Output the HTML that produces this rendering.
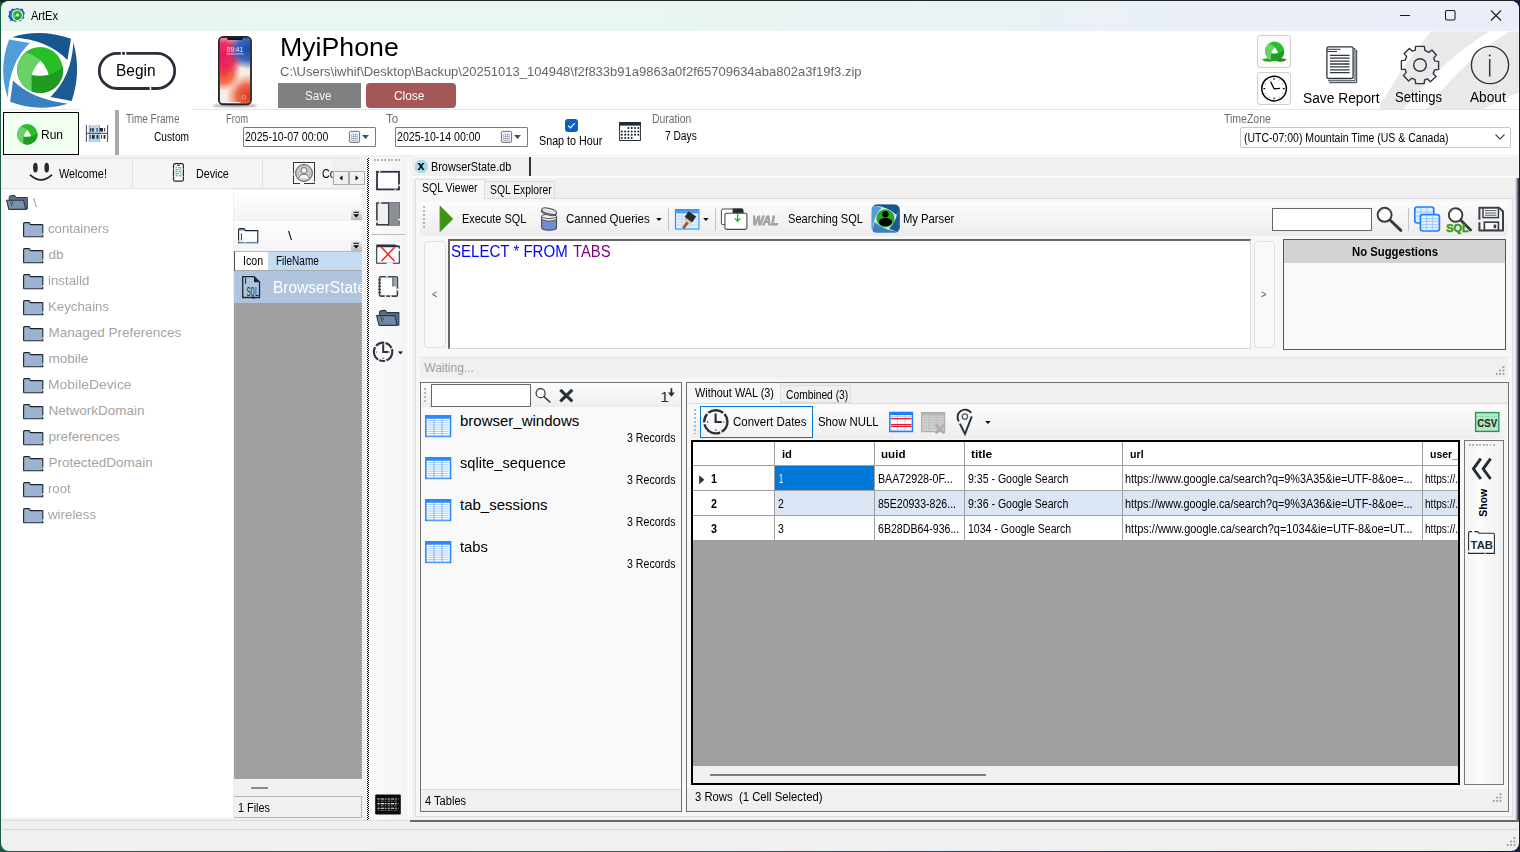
<!DOCTYPE html>
<html lang="en"><head><meta charset="utf-8"><title>ArtEx</title>
<style>
*{box-sizing:border-box;margin:0;padding:0}
html,body{width:1520px;height:852px;overflow:hidden}
body{background:linear-gradient(to right,#1b5a44 0%,#1d6a52 45%,#2a2a6a 75%,#1a1450 100%);font-family:"Liberation Sans",sans-serif;position:relative}
body:before{content:"";position:absolute;left:0;top:0;width:1520px;height:2px;background:#1a2420}
.win{position:absolute;left:1px;top:1px;width:1518px;height:849.5px;border-radius:8px;overflow:hidden;background:#f0f0f0}
.c{position:absolute;left:-1px;top:-1px;width:1520px;height:852px}
.b{position:absolute}
.t{position:absolute;white-space:nowrap;line-height:1;display:block;transform-origin:0 0}
svg{position:absolute;overflow:visible}

</style></head>
<body>
<div class="win"><div class="c">
<!-- title bar -->
<div class="b" style="left:0;top:0;width:1520px;height:31px;background:linear-gradient(to right,#e9f6f0 0%,#e9f6f1 40%,#eaf0f7 75%,#ebeef9 100%)"></div>
<!-- header white -->
<div class="b" style="left:0;top:31px;width:1520px;height:124px;background:#fff"></div>
<div class="b" style="left:192px;top:109px;width:1328px;height:1px;background:#e6e6e6"></div>
<!-- window buttons -->
<svg style="left:1395px;top:5px" width="120" height="22" viewBox="0 0 120 22"><g stroke="#1a1a1a" stroke-width="1.1" fill="none"><path d="M5 10.5h10"/><rect x="50.5" y="5.5" width="9.5" height="9.5" rx="1.5"/><path d="M96 5.5l10 10M106 5.5l-10 10"/></g></svg>
<!-- save/close buttons -->
<div class="b" style="left:278.2px;top:83.3px;width:82.6px;height:24.5px;background:#808080"></div>
<div class="b" style="left:366px;top:83.3px;width:89.8px;height:24.5px;background:#a55757;border-radius:4px"></div>
<!-- Begin pill -->
<!-- Run button -->
<div class="b" style="left:3px;top:112px;width:76px;height:43px;border:1px solid #000;background:#f0fff0"></div>
<div class="b" style="left:2px;top:109px;width:79px;height:1px;background:#ececec"></div>
<div class="b" style="left:115px;top:110px;width:4px;height:45px;background:#a9a9a9"></div>
<!-- date inputs -->
<div class="b" style="left:243px;top:127px;width:133px;height:20px;border:1px solid #7a7a7a;background:#fff;border-radius:1px"></div>
<div class="b" style="left:395px;top:127px;width:133px;height:20px;border:1px solid #7a7a7a;background:#fff;border-radius:1px"></div>
<!-- checkbox -->
<div class="b" style="left:565px;top:119px;width:13px;height:13px;background:#0a5fbf;border-radius:3px"></div>
<svg style="left:565px;top:119px" width="13" height="13" viewBox="0 0 13 13"><path d="M3.2 6.6l2.2 2.2 4.4-4.6" stroke="#fff" stroke-width="1.2" fill="none"/></svg>
<!-- timezone combo -->
<div class="b" style="left:1240px;top:127px;width:271px;height:21px;border:1px solid #c8c8c8;background:#fff;border-radius:2px"></div>
<svg style="left:1494px;top:133px" width="12" height="8" viewBox="0 0 12 8"><path d="M1.5 1.5l4.5 4.5 4.5-4.5" stroke="#444" stroke-width="1.1" fill="none"/></svg>
<!-- small buttons top right -->
<div class="b" style="left:1257px;top:35px;width:34px;height:33px;border:1px solid #d0d0d0;background:#fbfbfb;border-radius:3px"></div>
<div class="b" style="left:1257px;top:72px;width:34px;height:33px;border:1px solid #d0d0d0;background:#fbfbfb;border-radius:3px"></div>

<!-- LEFT: tab strip -->
<div class="b" style="left:2px;top:158px;width:364px;height:31px;background:#f5f5f5;border-top:1px solid #e8e8e8;border-bottom:1px solid #e2e2e2"></div>
<div class="b" style="left:132px;top:159px;width:1px;height:29px;background:#e2e2e2"></div>
<div class="b" style="left:262px;top:159px;width:1px;height:29px;background:#e2e2e2"></div>
<div class="b" style="left:332px;top:159px;width:34px;height:29px;background:#f0f0f0"></div>
<div class="b" style="left:333px;top:171px;width:16px;height:14px;border:1px solid #adadad;background:#f0f0f0"></div>
<div class="b" style="left:349px;top:171px;width:16px;height:14px;border:1px solid #adadad;background:#f0f0f0"></div>
<svg style="left:333px;top:171px" width="32" height="14" viewBox="0 0 32 14"><path d="M9.5 4.5v5l-3-2.5zM22.5 4.5v5l3-2.5z" fill="#000"/></svg>
<!-- tree -->
<div class="b" style="left:5px;top:189px;width:228px;height:629px;background:#fff"></div>
<div class="b" style="left:2px;top:189px;width:3px;height:629px;background:#f8f8f8"></div>
<!-- file panel -->
<div class="b" style="left:234px;top:190px;width:128px;height:30px;background:linear-gradient(#fff,#f4f4f4)"></div>
<div class="b" style="left:234px;top:221px;width:128px;height:29px;background:linear-gradient(#fff,#f4f4f4)"></div>
<div class="b" style="left:234px;top:251px;width:128px;height:20px;background:#fff;border-top:1px solid #bbb"></div>
<div class="b" style="left:268px;top:252px;width:94px;height:19px;background:#c3dcf3"></div>
<div class="b" style="left:234px;top:271px;width:128px;height:32px;background:#b0c4de"></div>
<div class="b" style="left:234px;top:270px;width:128px;height:1px;background:#a8a8a8"></div>
<div class="b" style="left:234px;top:251px;width:1px;height:20px;background:#555"></div>
<div class="b" style="left:234px;top:303px;width:128px;height:476px;background:#a0a0a0"></div>
<div class="b" style="left:251px;top:787px;width:17px;height:2px;background:#8a8a8a"></div>
<div class="b" style="left:234px;top:796px;width:128px;height:22px;border:1px solid #b5b5b5;border-left:none;background:#f0f0f0"></div>
<!-- splitter -->
<div class="b" style="left:366px;top:158px;width:4px;height:662px;background:#fbfbfb"></div>
<div class="b" style="left:367px;top:158px;width:2px;height:662px;background:repeating-conic-gradient(#000 0 25%,#fff 0 50%) 0 0/2px 2px"></div>
<!-- vertical toolbar -->
<div class="b" style="left:370px;top:157px;width:37px;height:663px;background:linear-gradient(to right,#fbfbfb,#f4f4f4)"></div>
<div class="b" style="left:407px;top:157px;width:3px;height:663px;background:#fafafa"></div>
<div class="b" style="left:374px;top:159.4px;width:26px;height:1.8px;background-image:repeating-linear-gradient(to right,#b4b4b4 0 1.8px,transparent 1.8px 3.45px)"></div>
<div class="b" style="left:372px;top:234px;width:33px;height:1px;background:#bdbdbd"></div>

<!-- RIGHT panel -->
<div class="b" style="left:411px;top:157px;width:1px;height:664px;background:#fcfcfc"></div>
<div class="b" style="left:411px;top:156px;width:1104px;height:1px;background:#fcfcfc"></div>
<div class="b" style="left:410px;top:820px;width:1109px;height:2.2px;background:#6a6a6a"></div>
<div class="b" style="left:1515.4px;top:178px;width:3.6px;height:642px;background:linear-gradient(to right,#ececec 0%,#b0b0b0 40%,#55535f 72%,#2e2c48 100%)"></div>
<div class="b" style="left:2px;top:820px;width:408px;height:1px;background:#dcdcdc"></div>
<div class="b" style="left:2px;top:829px;width:1516px;height:1px;background:#d5d5d5"></div>
<!-- doc tab -->
<div class="b" style="left:529px;top:157px;width:1.5px;height:20px;background:#333"></div>
<div class="b" style="left:412px;top:176px;width:1107px;height:1.5px;background:#fcfcfc"></div>
<!-- sql tabs -->
<div class="b" style="left:415px;top:198px;width:1098px;height:619px;background:#f7f7f7;border:1px solid #dedede"></div>
<div class="b" style="left:415px;top:179px;width:70px;height:21px;background:#f7f7f7;border:1px solid #dedede;border-bottom:none"></div>
<div class="b" style="left:485px;top:181px;width:70px;height:18px;background:#f0f0f0;border:1px solid #dcdcdc;border-left:none"></div>
<!-- sql toolbar -->
<div class="b" style="left:420px;top:202px;width:1088px;height:34px;background:linear-gradient(#fcfcfc,#ececec);border-radius:3px"></div>
<div class="b" style="left:423px;top:206px;width:2px;height:23px;background-image:repeating-linear-gradient(#b4b4b4 0 2px,transparent 2px 4px)"></div>
<div class="b" style="left:668px;top:208px;width:1px;height:23px;background:#c4c4c4"></div>
<div class="b" style="left:715px;top:208px;width:1px;height:23px;background:#c4c4c4"></div>
<div class="b" style="left:1408px;top:208px;width:1px;height:23px;background:#c4c4c4"></div>
<div class="b" style="left:1272px;top:208px;width:100px;height:23px;background:#fff;border:1px solid #666"></div>
<!-- editor -->
<div class="b" style="left:424px;top:241px;width:22px;height:107px;border:1px solid #e0e0e0;border-radius:4px;background:#f9f9f9"></div>
<div class="b" style="left:448px;top:239px;width:803px;height:110px;background:#fff;border:1px solid #d8d8d8;border-top:2px solid #666;border-left:2px solid #666"></div>
<div class="b" style="left:1254px;top:241px;width:21px;height:107px;border:1px solid #e0e0e0;border-radius:4px;background:#f9f9f9"></div>
<div class="b" style="left:1283px;top:239px;width:223px;height:111px;background:#f9f9f9;border:1px solid #555"></div>
<div class="b" style="left:1284px;top:240px;width:221px;height:23px;background:#d3d3d3"></div>
<!-- waiting -->
<div class="b" style="left:420px;top:357px;width:1088px;height:21px;background:#f0f0f0;border-top:1px solid #e4e4e4"></div>
<!-- tables panel -->
<div class="b" style="left:420px;top:382px;width:262px;height:430px;background:#f9f9f9;border:1px solid #707070"></div>
<div class="b" style="left:421px;top:383px;width:260px;height:24px;background:linear-gradient(#fdfdfd,#ededed)"></div>
<div class="b" style="left:424px;top:388px;width:2px;height:14px;background-image:repeating-linear-gradient(#b4b4b4 0 2px,transparent 2px 4px)"></div>
<div class="b" style="left:431px;top:384px;width:100px;height:23px;background:#fff;border:1px solid #666"></div>
<div class="b" style="left:421px;top:789px;width:260px;height:22px;background:#f0f0f0;border-top:1px solid #dcdcdc"></div>
<!-- results panel -->
<div class="b" style="left:686px;top:382px;width:823px;height:430px;background:#f0f0f0;border:1px solid #707070"></div>
<div class="b" style="left:687px;top:383px;width:94px;height:21px;background:#f7f7f7;border-right:1px solid #dedede"></div>
<div class="b" style="left:781px;top:385px;width:70px;height:18px;background:#f0f0f0;border:1px solid #dcdcdc;border-left:none"></div>
<div class="b" style="left:687px;top:403px;width:821px;height:386px;background:#f7f7f7;border-top:1px solid #dedede"></div>
<div class="b" style="left:691px;top:405px;width:814px;height:34px;background:linear-gradient(#fcfcfc,#eeeeee);border-radius:3px"></div>
<div class="b" style="left:694px;top:409px;width:2px;height:25px;background-image:repeating-linear-gradient(#b4b4b4 0 2px,transparent 2px 4px)"></div>
<div class="b" style="left:700px;top:406px;width:113px;height:32px;background:rgba(255,255,255,.25);border:1px solid #0078d7"></div>
<!-- grid -->
<div class="b" style="left:691px;top:440px;width:769px;height:345px;background:#a0a0a0;border:2px solid #000"></div>
<div class="b" style="left:693px;top:442px;width:765px;height:98px;background:#fff"></div>
<div class="b" style="left:775px;top:491px;width:683px;height:24px;background:#dbe5f3"></div>
<div class="b" style="left:775px;top:466px;width:99px;height:24px;background:#0078d7"></div>
<!-- grid lines -->
<div class="b" style="left:693px;top:465px;width:765px;height:1px;background:#a0a0a0"></div>
<div class="b" style="left:693px;top:490px;width:765px;height:1px;background:#a0a0a0"></div>
<div class="b" style="left:693px;top:515px;width:765px;height:1px;background:#a0a0a0"></div>
<div class="b" style="left:774px;top:442px;width:1px;height:98px;background:#a0a0a0"></div>
<div class="b" style="left:874px;top:442px;width:1px;height:98px;background:#a0a0a0"></div>
<div class="b" style="left:964px;top:442px;width:1px;height:98px;background:#a0a0a0"></div>
<div class="b" style="left:1122px;top:442px;width:1px;height:98px;background:#a0a0a0"></div>
<div class="b" style="left:1422px;top:442px;width:1px;height:98px;background:#a0a0a0"></div>
<svg style="left:699px;top:475px" width="6" height="10" viewBox="0 0 6 10"><path d="M0.2 0.2v9l5.2-4.5z" fill="#333"/></svg>
<!-- grid scrollbar -->
<div class="b" style="left:693px;top:766px;width:765px;height:17px;background:#f0f0f0"></div>
<div class="b" style="left:710px;top:774px;width:276px;height:2px;background:#7d7d7d"></div>
<!-- right side panel -->
<div class="b" style="left:1464px;top:440px;width:40px;height:345px;background:linear-gradient(to right,#f4f4f4,#fbfbfb 40%,#f1f1f1);border:1px solid #777"></div>
<div class="b" style="left:1469.4px;top:444px;width:26px;height:1.8px;background-image:repeating-linear-gradient(to right,#b4b4b4 0 1.8px,transparent 1.8px 3.45px)"></div>
<!-- results status -->
<div class="b" style="left:687px;top:789px;width:821px;height:22px;background:#f0f0f0"></div>
<!-- big logo -->
<svg style="left:0px;top:30px" width="90" height="82" viewBox="0 0 935 852">
<path d="M125,75 Q420,-18 738,92 L700,312 Q500,100 125,75Z" fill="#17568e"/>
<path d="M762,130 Q848,430 745,738 L525,695 Q745,480 762,130Z" fill="#1d5a92"/>
<path d="M135,525 Q330,720 705,765 Q400,858 105,745Z" fill="#3a80c0"/>
<path d="M310,135 L95,100 Q-22,400 80,705 Q100,330 310,135Z" fill="#529cda"/>
<circle cx="415" cy="415" r="238" fill="#28be28"/>
<path d="M270,235 Q360,260 420,318 Q350,390 330,468 L330,640 A238,238 0 0 1 270,235Z" fill="#68d268"/>
<path d="M330,468 Q420,485 505,465 Q600,440 655,380 A238,238 0 0 1 330,640Z" fill="#209a20"/>
<path d="M420,318 Q350,390 330,468 Q420,485 505,465 Q480,380 420,318Z" fill="#fff"/>
</svg>
<!-- title icon -->
<svg style="left:8.6px;top:6.6px" width="17.2" height="17.2" viewBox="8 6 19 19">
<path d="M11.4 7.6l2.8.6l3-1.2l2.9 1.2l2.9-.5l1 2.7l1.6 2.3l-1.2 2.6l.5 3l-2.6 1.2l-1.6 2.4l-2.9-.6l-2.7 1.3l-2.7-1.4l-2.9.4l-.9-2.8l-1.7-2.3l1.3-2.7l-.5-2.9l2.6-1.1z" fill="#2067b4"/>
<circle cx="17.2" cy="15.1" r="6.3" fill="#fff"/>
<circle cx="17.2" cy="15.1" r="5.2" fill="#28b428"/>
<path d="M12.2 13.6A5.2 5.2 0 0 0 15 19.8L15.2 15.6Z" fill="#68d268"/>
<path d="M15 16.4h4.6l2.4-1.2A5.2 5.2 0 0 1 14.8 19.7Z" fill="#209a20"/>
<path d="M17.3 12.7l2.3 3.6h-4.6z" fill="#fff"/>
</svg>
<!-- header swooshes -->
<svg style="left:1380px;top:31px" width="139" height="78" viewBox="1380 31 139 78">
<path d="M1385,97.4 Q1405,62 1431,31.4 L1489,31.4 Q1440,62 1404,109 L1380,109 L1380,104Z" fill="#e9e9e9"/>
<path d="M1426.4,109 Q1462,62 1509,31.4 L1519,31.4 L1519,92.5 Q1500,100 1484,109Z" fill="#e9e9e9"/>
</svg>
<!-- phone -->
<svg style="left:205px;top:30px" width="60" height="82" viewBox="0 0 623 852">
<defs>
<radialGradient id="pg1" cx="190" cy="260" r="230" gradientUnits="userSpaceOnUse"><stop offset="0" stop-color="#e8185c"/><stop offset=".55" stop-color="#e8205a" stop-opacity=".9"/><stop offset="1" stop-color="#e8205a" stop-opacity="0"/></radialGradient>
<radialGradient id="pg2" cx="450" cy="200" r="210" gradientUnits="userSpaceOnUse"><stop offset="0" stop-color="#1c48ac"/><stop offset=".55" stop-color="#2458b8" stop-opacity=".9"/><stop offset="1" stop-color="#2458b8" stop-opacity="0"/></radialGradient>
<radialGradient id="pg3" cx="450" cy="690" r="235" gradientUnits="userSpaceOnUse"><stop offset="0" stop-color="#e03818"/><stop offset=".5" stop-color="#e85030" stop-opacity=".85"/><stop offset="1" stop-color="#f08050" stop-opacity="0"/></radialGradient>
<radialGradient id="pg4" cx="195" cy="455" r="175" gradientUnits="userSpaceOnUse"><stop offset="0" stop-color="#f04a2c"/><stop offset=".55" stop-color="#f05c3a" stop-opacity=".85"/><stop offset="1" stop-color="#f07050" stop-opacity="0"/></radialGradient>
<filter id="pbl" x="-20%" y="-100%" width="140%" height="300%"><feGaussianBlur stdDeviation="9"/></filter>
<clipPath id="pcl"><rect x="152" y="80" width="318" height="684" rx="38"/></clipPath>
</defs>
<ellipse cx="310" cy="786" rx="235" ry="14" fill="#000" opacity=".45" filter="url(#pbl)"/>
<rect x="135" y="62" width="352" height="720" rx="56" fill="#222226"/>
<g clip-path="url(#pcl)">
<rect x="152" y="80" width="318" height="684" fill="#f7ebe4"/>
<rect x="152" y="80" width="318" height="684" fill="url(#pg4)"/>
<rect x="152" y="80" width="318" height="684" fill="url(#pg1)"/>
<rect x="152" y="80" width="318" height="684" fill="url(#pg2)"/>
<rect x="152" y="80" width="318" height="684" fill="url(#pg3)"/>
</g>
<path d="M228,78h165v8q0,18-18,18h-129q-18,0-18-18z" fill="#141416"/>
<text x="311" y="226" font-size="68" fill="#fff" text-anchor="middle" font-family="Liberation Sans,sans-serif" opacity=".92">09:41</text>
<rect x="222" y="243" width="180" height="12" fill="#fff" opacity=".55"/>
<circle cx="212" cy="698" r="19" fill="none" stroke="#fff" stroke-width="5" opacity=".8"/>
<circle cx="406" cy="698" r="19" fill="none" stroke="#fff" stroke-width="5" opacity=".8"/>
<rect x="205" y="748" width="165" height="7" rx="3" fill="#fff"/>
</svg>
<!-- begin pill -->
<svg style="left:90px;top:44px" width="96" height="54" viewBox="90 44 96 54">
<rect x="99.3" y="53.3" width="75.4" height="35.2" rx="17.6" fill="none" stroke="#27303a" stroke-width="2.8"/>
<rect x="120.8" y="51" width="1.3" height="5" fill="#fff"/><rect x="124.9" y="51" width="1.4" height="5" fill="#fff"/>
<rect x="149.7" y="86" width="1.5" height="5" fill="#fff"/>
</svg>
<!-- run icon -->
<svg style="left:16.6px;top:123.6px" width="20.4" height="20.4" viewBox="177 177 476 476">
<circle cx="415" cy="415" r="238" fill="#28be28"/>
<path d="M270,235 Q360,260 420,318 Q350,390 330,468 L330,640 A238,238 0 0 1 270,235Z" fill="#68d268"/>
<path d="M330,468 Q420,485 505,465 Q600,440 655,380 A238,238 0 0 1 330,640Z" fill="#209a20"/>
<path d="M420,318 Q350,390 330,468 Q420,485 505,465 Q480,380 420,318Z" fill="#fff"/>
</svg>
<!-- barcode icon -->
<svg style="left:85px;top:124px" width="24" height="19" viewBox="85 124 24 19">
<rect x="89" y="125" width="10.8" height="17" fill="#bcd6f2"/>
<path d="M89.3 125v17M99.6 125v17" stroke="#5a9ae0" stroke-width=".7"/>
<path d="M86.4 125v17M107.6 125v17M86 133.3h22" stroke="#2a3444" stroke-width=".9"/>
<g fill="#1f2833"><rect x="90.2" y="128" width="1.1" height="3.6"/><rect x="92.2" y="128" width="1.6" height="3.6"/><rect x="96.6" y="128" width="1" height="3.6"/><rect x="99.6" y="128" width="3.4" height="3.6"/><rect x="104.2" y="128" width=".9" height="3.6"/>
<rect x="89.8" y="135" width=".9" height="3.8"/><rect x="92" y="135" width="2.6" height="3.8"/><rect x="96.6" y="135" width="1.8" height="3.8"/><rect x="101" y="135" width=".9" height="3.8"/><rect x="103.6" y="135" width="1.8" height="3.8"/></g>
</svg>
<!-- date picker icons -->
<svg style="left:348px;top:130px" width="24" height="14" viewBox="348 130 24 14">
<rect x="349.4" y="131.4" width="10.2" height="11" rx="1.2" fill="#e9eef8" stroke="#6e5e5c" stroke-width=".9"/>
<rect x="351.3" y="134.2" width="6.4" height="6.6" fill="#aab2c4"/>
<g fill="#eef2fa"><rect x="352" y="134.9" width="1.1" height="1.1"/><rect x="354" y="134.9" width="1.1" height="1.1"/><rect x="356" y="134.9" width="1.1" height="1.1"/><rect x="352" y="136.9" width="1.1" height="1.1"/><rect x="354" y="136.9" width="1.1" height="1.1"/><rect x="356" y="136.9" width="1.1" height="1.1"/><rect x="352" y="138.9" width="1.1" height="1.1"/><rect x="354" y="138.9" width="1.1" height="1.1"/><rect x="356" y="138.9" width="1.1" height="1.1"/></g>
<path d="M362 135h7l-3.5 4z" fill="#3c4e78"/>
</svg>
<svg style="left:500px;top:130px" width="24" height="14" viewBox="348 130 24 14">
<rect x="349.4" y="131.4" width="10.2" height="11" rx="1.2" fill="#e9eef8" stroke="#6e5e5c" stroke-width=".9"/>
<rect x="351.3" y="134.2" width="6.4" height="6.6" fill="#aab2c4"/>
<g fill="#eef2fa"><rect x="352" y="134.9" width="1.1" height="1.1"/><rect x="354" y="134.9" width="1.1" height="1.1"/><rect x="356" y="134.9" width="1.1" height="1.1"/><rect x="352" y="136.9" width="1.1" height="1.1"/><rect x="354" y="136.9" width="1.1" height="1.1"/><rect x="356" y="136.9" width="1.1" height="1.1"/><rect x="352" y="138.9" width="1.1" height="1.1"/><rect x="354" y="138.9" width="1.1" height="1.1"/><rect x="356" y="138.9" width="1.1" height="1.1"/></g>
<path d="M362 135h7l-3.5 4z" fill="#3c4e78"/>
</svg>
<!-- calendar icon -->
<svg style="left:618px;top:121px" width="24" height="21" viewBox="618 121 24 21">
<rect x="619.6" y="122.5" width="20.8" height="18" fill="#fff" stroke="#222c36" stroke-width="1"/>
<rect x="619.2" y="122" width="21.6" height="3.6" fill="#222c36"/>
<g fill="#1c222a">
<circle cx="628.4" cy="128" r="1"/><circle cx="631.7" cy="128" r="1"/><circle cx="635" cy="128" r="1"/><circle cx="638.3" cy="128" r="1"/>
<circle cx="621.8" cy="131.4" r="1"/><circle cx="625.1" cy="131.4" r="1"/><circle cx="628.4" cy="131.4" r="1"/><circle cx="631.7" cy="131.4" r="1"/><circle cx="635" cy="131.4" r="1"/><circle cx="638.3" cy="131.4" r="1"/>
<circle cx="621.8" cy="134.7" r="1"/><circle cx="625.1" cy="134.7" r="1"/><circle cx="628.4" cy="134.7" r="1"/><circle cx="631.7" cy="134.7" r="1"/><circle cx="635" cy="134.7" r="1"/><circle cx="638.3" cy="134.7" r="1"/>
<circle cx="621.8" cy="138" r="1"/><circle cx="625.1" cy="138" r="1"/><circle cx="628.4" cy="138" r="1"/><circle cx="631.7" cy="138" r="1"/>
</g></svg>
<!-- top-right small buttons icons -->
<svg style="left:1257px;top:35px" width="34" height="70" viewBox="1257 35 34 70">
<path d="M1261.7 59.8q6-3.4 12.6 0.6q-6.6 3.2-12.6-0.6z" fill="#22a622"/>
<path d="M1274.6 60.4q6.4-4 12.4-0.6q-6 3.8-12.4 0.6z" fill="#2f7d2f"/>
<g transform="translate(1265 41.6) scale(0.03992)"><g transform="translate(-177 -177)">
<circle cx="415" cy="415" r="238" fill="#28be28"/>
<path d="M270,235 Q360,260 420,318 Q350,390 330,468 L330,640 A238,238 0 0 1 270,235Z" fill="#68d268"/>
<path d="M330,468 Q420,485 505,465 Q600,440 655,380 A238,238 0 0 1 330,640Z" fill="#209a20"/>
<path d="M420,318 Q350,390 330,468 Q420,485 505,465 Q480,380 420,318Z" fill="#fff"/></g></g>
<circle cx="1274.1" cy="88.6" r="12.3" fill="#fff" stroke="#000" stroke-width="1.5"/>
<path d="M1270.9 82.2l3.2 6.6l5.4-.5" stroke="#000" stroke-width="1.3" fill="none" stroke-linecap="round"/>
<g stroke="#000" stroke-width="1.1"><path d="M1274.1 78v1.8M1274.1 97.4v1.8M1263.5 88.6h1.8M1282.9 88.6h1.8"/></g>
<g stroke="#777" stroke-width=".7"><path d="M1268.8 79.4l.7 1.2M1279.4 79.4l-.7 1.2M1264.9 83.3l1.2.7M1283.3 83.3l-1.2.7M1264.9 93.9l1.2-.7M1283.3 93.9l-1.2-.7M1268.8 97.8l.7-1.2M1279.4 97.8l-.7-1.2"/></g>
</svg>
<!-- save report icon -->
<svg style="left:1322px;top:42px" width="40" height="44" viewBox="1322 42 40 44">
<g fill="none" stroke="#2c3640" stroke-width="1">
<path d="M1355.5 50.5h1.2v32.2h-27.5"/><path d="M1353.8 48.6h1.2v32.2h-27"/></g>
<rect x="1326.9" y="46.9" width="26.2" height="31.6" rx="1.6" fill="#fff" stroke="#2c3640" stroke-width="1.3"/>
<g stroke="#2c3640" stroke-width="1"><path d="M1327 49.3h13.6M1327 51.5h10"/></g>
<g stroke="#2c3640" stroke-width="1.3"><path d="M1330 55.3h19.6M1330 58.2h19.6M1330 61.1h19.6M1330 64h19.6M1330 66.9h19.6M1330 69.8h19.6M1330 72.7h19.6"/></g>
</svg>
<!-- gear -->
<svg style="left:1398px;top:43px" width="44" height="44" viewBox="-22 -22 44 44">
<g fill="none" stroke="#2c3640" stroke-width="1.4" stroke-linejoin="round">
<path d="M-4.4,-18.6 L4.4,-18.6 L4.9,-14.6 L8.9,-12.6 L11.9,-15.0 L16.3,-10.0 L13.6,-6.9 L14.8,-3.9 L18.6,-3.6 L18.6,4.4 L14.7,4.9 L13.2,8.4 L16.1,11.4 L10.4,16.8 L7.4,13.8 L4.6,14.9 L4.2,18.6 L-4.4,18.6 L-4.9,14.7 L-8.2,13.2 L-11.4,16.0 L-16.6,10.6 L-13.8,7.4 L-14.8,4.4 L-18.6,4.2 L-18.6,-4.4 L-14.7,-4.9 L-13.3,-8.4 L-15.8,-11.4 L-10.6,-16.4 L-7.4,-13.8 L-4.7,-14.8 Z"/>
<circle cx="0" cy="0" r="6.3"/></g></svg>
<!-- about -->
<svg style="left:1468px;top:43px" width="44" height="44" viewBox="-22 -22 44 44">
<circle cx="0" cy="0" r="18.6" fill="none" stroke="#2c3640" stroke-width="1.4"/>
<path d="M-.3 -5.9v17.3" stroke="#2c3640" stroke-width="1.5" fill="none"/><circle cx="-.3" cy="-9.6" r="1" fill="#2c3640"/>
</svg>
<!-- smiley -->
<svg style="left:28px;top:160px" width="26" height="24" viewBox="28 160 26 24">
<ellipse cx="35.4" cy="167.7" rx="2.3" ry="4.9" fill="#2a2a2a"/><ellipse cx="46.7" cy="167.7" rx="2.3" ry="4.9" fill="#2a2a2a"/>
<path d="M30.4 175.2q10.6 9.4 21.2 0" fill="none" stroke="#222" stroke-width="1.7" stroke-linecap="round"/>
</svg>
<!-- device icon -->
<svg style="left:171px;top:161px" width="15" height="23" viewBox="171 161 15 23">
<rect x="173.5" y="163.6" width="9.9" height="17.6" rx="1.8" fill="#fff" stroke="#222" stroke-width="1.2"/>
<path d="M172.6 168.5v1.2M184.3 168.5v1.2M172.6 176v1.2M184.3 176v1.2" stroke="#f5f5f5" stroke-width="1.4"/>
<path d="M177 165.3h3" stroke="#222" stroke-width=".9"/>
<g stroke="#2a9d9d" stroke-width="1"><path d="M175.4 167.8h1.6M178 167.8h3.6M175.4 169.8h3.2M179.6 169.8h2M175.4 171.8h2M178.4 171.8h3.2M175.4 173.8h3.6M180 173.8h1.6M175.4 175.8h2.4M178.8 175.8h2.8"/></g>
</svg>
<!-- contact icon -->
<svg style="left:292px;top:161px" width="24" height="24" viewBox="292 161 24 24">
<rect x="293.5" y="162.5" width="21" height="21" fill="#f8f8f8" stroke="#333" stroke-width="1"/>
<path d="M292.9 173.5v2M315.2 181v2.2M300 183.6h4" stroke="#f5f5f5" stroke-width="1.5"/>
<circle cx="304" cy="173" r="8.4" fill="#c8c8c8" stroke="#555" stroke-width="1"/>
<circle cx="304" cy="170.4" r="2.9" fill="#f2f2f2" stroke="#666" stroke-width=".9"/>
<path d="M298.6 178.6q1-4.4 5.4-4.4t5.4 4.4" fill="#f2f2f2" stroke="#666" stroke-width=".9"/>
</svg>
<!-- root folder --><svg style="left:6px;top:195px" width="22" height="15.2" viewBox="0 0 22 15">
<path d="M3.2 14V2.2q0-1.4 1.4-1.6l3.4-.3q1.2 0 1.6 1.2l.3.9H21.3V14z" fill="#5a708a" stroke="#2a3848" stroke-width="1"/>
<path d="M.6 5.2H17.6L19.8 14.3H2.9z" fill="#7890a8" stroke="#2a3848" stroke-width="1.1" stroke-linejoin="round"/>
<path d="M4.4 6.6l1.6 5M6 6.4l1 3" stroke="#2a3848" stroke-width=".7"/>
</svg>
<!-- vtoolbar folder --><svg style="left:376.3px;top:310.2px" width="23.6" height="16.2" viewBox="0 0 22 15">
<path d="M3.2 14V2.2q0-1.4 1.4-1.6l3.4-.3q1.2 0 1.6 1.2l.3.9H21.3V14z" fill="#586e88" stroke="#2a3848" stroke-width="1"/>
<path d="M.6 5.2H17.6L19.8 14.3H2.9z" fill="#6f8aa6" stroke="#2a3848" stroke-width="1.1" stroke-linejoin="round"/>
<path d="M4.4 6.6l1.6 5M6 6.4l1 3" stroke="#2a3848" stroke-width=".7"/>
</svg>
<svg style="left:22.8px;top:221.8px" width="20.4" height="15.4" viewBox="0 0 20.4 15.4">
<path d="M.6 14.6V1.6q0-1 1-1h4q1 0 1.3 .8l.5 1.2H19.6V14.6z" fill="#9cb4d0"/>
<path d="M.6 14.8V1.6q0-1 1-1h4q1 0 1.3 .8l.5 1.2H19.8" fill="none" stroke="#1a2430" stroke-width="1.1"/>
<path d="M19.8 2.6V14.8H.6" fill="none" stroke="#1a2430" stroke-width="1.1" stroke-dasharray="9 1.2 30"/>
<path d="M.6 2.7H7" stroke="#9cb4d0" stroke-width="0"/>
</svg>
<svg style="left:22.8px;top:247.8px" width="20.4" height="15.4" viewBox="0 0 20.4 15.4">
<path d="M.6 14.6V1.6q0-1 1-1h4q1 0 1.3 .8l.5 1.2H19.6V14.6z" fill="#9cb4d0"/>
<path d="M.6 14.8V1.6q0-1 1-1h4q1 0 1.3 .8l.5 1.2H19.8" fill="none" stroke="#1a2430" stroke-width="1.1"/>
<path d="M19.8 2.6V14.8H.6" fill="none" stroke="#1a2430" stroke-width="1.1" stroke-dasharray="9 1.2 30"/>
<path d="M.6 2.7H7" stroke="#9cb4d0" stroke-width="0"/>
</svg>
<svg style="left:22.8px;top:273.8px" width="20.4" height="15.4" viewBox="0 0 20.4 15.4">
<path d="M.6 14.6V1.6q0-1 1-1h4q1 0 1.3 .8l.5 1.2H19.6V14.6z" fill="#9cb4d0"/>
<path d="M.6 14.8V1.6q0-1 1-1h4q1 0 1.3 .8l.5 1.2H19.8" fill="none" stroke="#1a2430" stroke-width="1.1"/>
<path d="M19.8 2.6V14.8H.6" fill="none" stroke="#1a2430" stroke-width="1.1" stroke-dasharray="9 1.2 30"/>
<path d="M.6 2.7H7" stroke="#9cb4d0" stroke-width="0"/>
</svg>
<svg style="left:22.8px;top:299.8px" width="20.4" height="15.4" viewBox="0 0 20.4 15.4">
<path d="M.6 14.6V1.6q0-1 1-1h4q1 0 1.3 .8l.5 1.2H19.6V14.6z" fill="#9cb4d0"/>
<path d="M.6 14.8V1.6q0-1 1-1h4q1 0 1.3 .8l.5 1.2H19.8" fill="none" stroke="#1a2430" stroke-width="1.1"/>
<path d="M19.8 2.6V14.8H.6" fill="none" stroke="#1a2430" stroke-width="1.1" stroke-dasharray="9 1.2 30"/>
<path d="M.6 2.7H7" stroke="#9cb4d0" stroke-width="0"/>
</svg>
<svg style="left:22.8px;top:325.8px" width="20.4" height="15.4" viewBox="0 0 20.4 15.4">
<path d="M.6 14.6V1.6q0-1 1-1h4q1 0 1.3 .8l.5 1.2H19.6V14.6z" fill="#9cb4d0"/>
<path d="M.6 14.8V1.6q0-1 1-1h4q1 0 1.3 .8l.5 1.2H19.8" fill="none" stroke="#1a2430" stroke-width="1.1"/>
<path d="M19.8 2.6V14.8H.6" fill="none" stroke="#1a2430" stroke-width="1.1" stroke-dasharray="9 1.2 30"/>
<path d="M.6 2.7H7" stroke="#9cb4d0" stroke-width="0"/>
</svg>
<svg style="left:22.8px;top:351.8px" width="20.4" height="15.4" viewBox="0 0 20.4 15.4">
<path d="M.6 14.6V1.6q0-1 1-1h4q1 0 1.3 .8l.5 1.2H19.6V14.6z" fill="#9cb4d0"/>
<path d="M.6 14.8V1.6q0-1 1-1h4q1 0 1.3 .8l.5 1.2H19.8" fill="none" stroke="#1a2430" stroke-width="1.1"/>
<path d="M19.8 2.6V14.8H.6" fill="none" stroke="#1a2430" stroke-width="1.1" stroke-dasharray="9 1.2 30"/>
<path d="M.6 2.7H7" stroke="#9cb4d0" stroke-width="0"/>
</svg>
<svg style="left:22.8px;top:377.8px" width="20.4" height="15.4" viewBox="0 0 20.4 15.4">
<path d="M.6 14.6V1.6q0-1 1-1h4q1 0 1.3 .8l.5 1.2H19.6V14.6z" fill="#9cb4d0"/>
<path d="M.6 14.8V1.6q0-1 1-1h4q1 0 1.3 .8l.5 1.2H19.8" fill="none" stroke="#1a2430" stroke-width="1.1"/>
<path d="M19.8 2.6V14.8H.6" fill="none" stroke="#1a2430" stroke-width="1.1" stroke-dasharray="9 1.2 30"/>
<path d="M.6 2.7H7" stroke="#9cb4d0" stroke-width="0"/>
</svg>
<svg style="left:22.8px;top:403.8px" width="20.4" height="15.4" viewBox="0 0 20.4 15.4">
<path d="M.6 14.6V1.6q0-1 1-1h4q1 0 1.3 .8l.5 1.2H19.6V14.6z" fill="#9cb4d0"/>
<path d="M.6 14.8V1.6q0-1 1-1h4q1 0 1.3 .8l.5 1.2H19.8" fill="none" stroke="#1a2430" stroke-width="1.1"/>
<path d="M19.8 2.6V14.8H.6" fill="none" stroke="#1a2430" stroke-width="1.1" stroke-dasharray="9 1.2 30"/>
<path d="M.6 2.7H7" stroke="#9cb4d0" stroke-width="0"/>
</svg>
<svg style="left:22.8px;top:429.8px" width="20.4" height="15.4" viewBox="0 0 20.4 15.4">
<path d="M.6 14.6V1.6q0-1 1-1h4q1 0 1.3 .8l.5 1.2H19.6V14.6z" fill="#9cb4d0"/>
<path d="M.6 14.8V1.6q0-1 1-1h4q1 0 1.3 .8l.5 1.2H19.8" fill="none" stroke="#1a2430" stroke-width="1.1"/>
<path d="M19.8 2.6V14.8H.6" fill="none" stroke="#1a2430" stroke-width="1.1" stroke-dasharray="9 1.2 30"/>
<path d="M.6 2.7H7" stroke="#9cb4d0" stroke-width="0"/>
</svg>
<svg style="left:22.8px;top:455.8px" width="20.4" height="15.4" viewBox="0 0 20.4 15.4">
<path d="M.6 14.6V1.6q0-1 1-1h4q1 0 1.3 .8l.5 1.2H19.6V14.6z" fill="#9cb4d0"/>
<path d="M.6 14.8V1.6q0-1 1-1h4q1 0 1.3 .8l.5 1.2H19.8" fill="none" stroke="#1a2430" stroke-width="1.1"/>
<path d="M19.8 2.6V14.8H.6" fill="none" stroke="#1a2430" stroke-width="1.1" stroke-dasharray="9 1.2 30"/>
<path d="M.6 2.7H7" stroke="#9cb4d0" stroke-width="0"/>
</svg>
<svg style="left:22.8px;top:481.8px" width="20.4" height="15.4" viewBox="0 0 20.4 15.4">
<path d="M.6 14.6V1.6q0-1 1-1h4q1 0 1.3 .8l.5 1.2H19.6V14.6z" fill="#9cb4d0"/>
<path d="M.6 14.8V1.6q0-1 1-1h4q1 0 1.3 .8l.5 1.2H19.8" fill="none" stroke="#1a2430" stroke-width="1.1"/>
<path d="M19.8 2.6V14.8H.6" fill="none" stroke="#1a2430" stroke-width="1.1" stroke-dasharray="9 1.2 30"/>
<path d="M.6 2.7H7" stroke="#9cb4d0" stroke-width="0"/>
</svg>
<svg style="left:22.8px;top:507.8px" width="20.4" height="15.4" viewBox="0 0 20.4 15.4">
<path d="M.6 14.6V1.6q0-1 1-1h4q1 0 1.3 .8l.5 1.2H19.6V14.6z" fill="#9cb4d0"/>
<path d="M.6 14.8V1.6q0-1 1-1h4q1 0 1.3 .8l.5 1.2H19.8" fill="none" stroke="#1a2430" stroke-width="1.1"/>
<path d="M19.8 2.6V14.8H.6" fill="none" stroke="#1a2430" stroke-width="1.1" stroke-dasharray="9 1.2 30"/>
<path d="M.6 2.7H7" stroke="#9cb4d0" stroke-width="0"/>
</svg>
<svg style="left:238px;top:227.6px" width="20.4" height="15.4" viewBox="0 0 20.4 15.4">
<path d="M.6 14.6V1.6q0-1 1-1h4q1 0 1.3 .8l.5 1.2H19.6V14.6z" fill="#fff"/>
<path d="M.9 3V1.8q0-.9 .9-.9h3.8q.8 0 1.1 .7l.6 1.4z" fill="#9cb4d0"/>
<path d="M.6 14.8V1.6q0-1 1-1h4q1 0 1.3 .8l.5 1.2H19.8V14.8z" fill="none" stroke="#1a2430" stroke-width="1.1"/>
<path d="M3.4 5.4v7" stroke="#1a2430" stroke-width=".9"/>
<path d="M.2 13.2h1M6 14.8h1.6" stroke="#fff" stroke-width="1.3"/>
<path d="M.9 14.2h18.6" stroke="#9cb4d0" stroke-width=".8"/>
</svg>
<svg style="left:351px;top:209px" width="11" height="11" viewBox="0 0 11 11">
<defs><linearGradient id="ov209" x1="0" y1="0" x2="0" y2="1"><stop offset="0" stop-color="#f2f2f2"/><stop offset="1" stop-color="#b9b9b9"/></linearGradient></defs>
<path d="M0 0h9.6l1.4 1.4V11H0z" fill="url(#ov209)"/>
<path d="M2.4 3.2h5.6" stroke="#000" stroke-width="1.1"/><path d="M2.2 5.2h6l-3 3.2z" fill="#000"/>
</svg>
<svg style="left:351px;top:240px" width="11" height="11" viewBox="0 0 11 11">
<defs><linearGradient id="ov240" x1="0" y1="0" x2="0" y2="1"><stop offset="0" stop-color="#f2f2f2"/><stop offset="1" stop-color="#b9b9b9"/></linearGradient></defs>
<path d="M0 0h9.6l1.4 1.4V11H0z" fill="url(#ov240)"/>
<path d="M2.4 3.2h5.6" stroke="#000" stroke-width="1.1"/><path d="M2.2 5.2h6l-3 3.2z" fill="#000"/>
</svg>
<!-- sql file icon -->
<svg style="left:241px;top:275px" width="21" height="25" viewBox="241 275 21 25">
<path d="M242.7 276.7h11.4l5.4 5.4v15.4H242.7z" fill="none" stroke="#1c2630" stroke-width="1.3"/>
<path d="M254 276.8v5.4h5.2z" fill="#1c2630"/>
<path d="M245.6 277.6v6.4" stroke="#1c2630" stroke-width="1"/>
<text x="246.4" y="296" font-size="12" fill="#1c2630" font-family="Liberation Mono,monospace" textLength="12.4" lengthAdjust="spacingAndGlyphs">SQL</text>
</svg>
<!-- vtoolbar icons -->
<svg style="left:374px;top:168px" width="30" height="100" viewBox="374 168 30 100">
<rect x="377" y="171.8" width="22" height="17.6" fill="#fff" stroke="#2a3444" stroke-width="1.8"/>
<path d="M379 171.6h1.4M398.4 185.4h1.6M394.6 189.6h1.2" stroke="#f6f6f6" stroke-width="1.8"/>
<rect x="376.9" y="203" width="22.2" height="21.8" fill="#f0f0f0" stroke="#2a3444" stroke-width="1.5"/>
<rect x="388.8" y="202.4" width="10.8" height="23" fill="#8c8f92"/>
<path d="M388.6 202.4v23" stroke="#2a3444" stroke-width="1.1"/>
<path d="M379.2 202.9h2M376.8 220.4v2M398.4 219.6h1.6" stroke="#f6f6f6" stroke-width="1.6"/>
<rect x="376.7" y="246.2" width="22.6" height="17" fill="#fff" stroke="#2a3444" stroke-width="1.1"/>
<path d="M376.3 244.4h18.4l4.8 1.8v1H376.3z" fill="#2a3444"/>
<path d="M380.8 261.6h1.6M399.3 248.8v2M386.5 263.2h6.4" stroke="#f6f6f6" stroke-width="1.6"/>
<path d="M381.4 247.2l13.2 14M394.6 247.2l-13.2 14" stroke="#ff1e1e" stroke-width="1.5"/>
</svg>
<svg style="left:376px;top:274px" width="26" height="26" viewBox="376 274 26 26">
<rect x="379.6" y="276.7" width="17.8" height="19.4" rx="1" fill="#fff" stroke="#3a4454" stroke-width="1.6"/>
<path d="M393 277h3.4v9.4H393z" fill="#9aa0a8"/><path d="M392.8 277v9.6" stroke="#3a4454" stroke-width=".9"/>
<path d="M378 279.8h3.2M378 283h3.2M378 286.2h3.2M378 289.4h3.2M378 292.6h3.2" stroke="#3a4454" stroke-width="1"/>
<path d="M386 276.7h1.6M397.4 288.6v2.2M384.6 296.1h1.8M390 296.1h1.6" stroke="#f6f6f6" stroke-width="1.7"/>
</svg>
<svg style="left:371px;top:339px" width="34" height="26" viewBox="371 339 34 26">
<circle cx="383.1" cy="351.8" r="9.2" fill="none" stroke="#2a3444" stroke-width="2.1" stroke-dasharray="11 1.4 6 1.2 14 1.6 9 1.3 8 1.2"/>
<path d="M383.2 344.2v7.8h5.2" fill="none" stroke="#2a3444" stroke-width="2"/>
<circle cx="376.6" cy="352" r=".6" fill="#2a3444"/><circle cx="383.1" cy="358.2" r=".6" fill="#2a3444"/><circle cx="389.4" cy="352" r=".6" fill="#2a3444"/>
<path d="M398 351.4h5l-2.5 2.8z" fill="#000"/>
</svg>
<!-- bottom black icon -->
<svg style="left:375px;top:794px" width="26" height="21" viewBox="375 794 26 21">
<rect x="375.2" y="794.4" width="25.6" height="20" rx="1" fill="#0a0a0a"/>
<g stroke="#e8e8e8" stroke-width="1.1" stroke-dasharray="2.2 1 3.4 .8 1.6 1.2"><path d="M377.4 799h21M377.4 803.6h21M377.4 808.2h21"/></g>
<g stroke="#9a9a9a" stroke-width=".8" stroke-dasharray="1.4 1.6 2.6 1"><path d="M378 801.2h20M378 805.8h20M378 810.4h20"/></g>
</svg><!-- doc tab x -->
<svg style="left:414px;top:159px" width="15" height="15" viewBox="414 159 15 15">
<path d="M418.6 160h5.6l3.6 3.6v5.6l-3.6 3.7h-5.6l-3.7-3.7v-5.6z" fill="#add8e6"/>
<text x="417.6" y="170.3" font-size="12.5" font-weight="700" fill="#000" font-family="Liberation Sans,sans-serif">x</text>
</svg>
<!-- play -->
<svg style="left:438px;top:205px" width="16" height="28" viewBox="438 205 16 28">
<path d="M440.2 206.6l12.2 12.3l-12.2 12.3z" fill="#3c9614" stroke="#3c9614" stroke-width="1.2" stroke-linejoin="round"/>
</svg>
<!-- can -->
<svg style="left:540px;top:206px" width="18" height="26" viewBox="540 206 18 26">
<path d="M541.7 216.4v11.4q0 2.3 7.4 2.3t7.4-2.3v-11.4z" fill="#6f8fd2" stroke="#4a4a4a" stroke-width="1.1"/>
<path d="M541.7 216.4v3q3 1.8 7.4 1.8t7.4-1.8v-3z" fill="#e4e7ee" stroke="#4a4a4a" stroke-width=".9"/>
<ellipse cx="549.1" cy="216.4" rx="7.4" ry="2.1" fill="#f2f3f6" stroke="#4a4a4a" stroke-width=".9"/>
<g transform="rotate(14 549 211.6)"><ellipse cx="549" cy="212.4" rx="7.6" ry="2.7" fill="#b9bdc4" stroke="#4a4a4a" stroke-width="1"/><ellipse cx="549" cy="211.2" rx="7.6" ry="2.7" fill="#dfe2e7" stroke="#4a4a4a" stroke-width="1"/></g>
</svg>
<!-- dropdown arrows -->
<svg style="left:655px;top:217px" width="8" height="5" viewBox="0 0 8 5"><path d="M1.2 1h5.4l-2.7 3z" fill="#000"/></svg>
<svg style="left:702px;top:217px" width="8" height="5" viewBox="0 0 8 5"><path d="M1.2 1h5.4l-2.7 3z" fill="#000"/></svg>
<svg style="left:984px;top:420px" width="8" height="5" viewBox="0 0 8 5"><path d="M1.2 1h5.4l-2.7 3z" fill="#000"/></svg>
<!-- brush icon -->
<svg style="left:674px;top:208px" width="26" height="22" viewBox="674 208 26 22">
<rect x="675.5" y="209.6" width="23.4" height="19.4" fill="#e6f0fc" stroke="#1e90ff" stroke-width="1.1"/>
<rect x="676" y="210" width="22.4" height="3.4" fill="#4a9cf6"/>
<g stroke="#a9cdf6" stroke-width=".8"><path d="M676 216h22.4M676 219h22.4M676 222h22.4M676 225h22.4M682 213.4v15.4M690 213.4v15.4"/></g>
<path d="M688.6 211.2l7.6 5.2l-4.2 6l-7.4-5.4z" fill="#2b2b2b"/>
<path d="M685 217.4l6.6 4.8l-1.2 1.7l-6.6-4.8z" fill="#d8c690"/>
<path d="M686.2 221.4l2.6 1.9l-4.6 6l-2-1.5z" fill="#a0522d"/>
</svg>
<!-- window icon -->
<svg style="left:720px;top:207px" width="29" height="24" viewBox="720 207 29 24">
<rect x="721.4" y="209" width="21.6" height="15.6" rx="1.4" fill="#fdfdfd" stroke="#4a4a4a" stroke-width="1"/>
<path d="M732.6 208.6h9.4q1.2 0 1.2 1.2v3.4h-10.6z" fill="#222c38"/>
<rect x="724.9" y="213.2" width="22" height="16.2" rx="1.6" fill="#fff" stroke="#4a4a4a" stroke-width="1.1"/>
<path d="M737.6 213.4v7.6M734.9 218.4l2.7 3l2.7-3" fill="none" stroke="#20b020" stroke-width="1.3"/>
</svg>
<!-- WAL -->
<svg style="left:750px;top:210px" width="32" height="18" viewBox="750 210 32 18">
<defs><filter id="wb"><feGaussianBlur stdDeviation=".45"/></filter></defs>
<text x="752.4" y="224.6" font-size="13.5" font-weight="700" font-style="italic" fill="#a2a2a2" stroke="#a2a2a2" stroke-width=".9" font-family="Liberation Sans,sans-serif" textLength="26" lengthAdjust="spacingAndGlyphs" filter="url(#wb)">WAL</text>
</svg>
<!-- my parser icon -->
<svg style="left:870.5px;top:204.2px" width="29.2" height="29.2" viewBox="30 30 790 790">
<defs><clipPath id="mpc"><rect x="40" y="40" width="770" height="770" rx="150"/></clipPath></defs>
<g clip-path="url(#mpc)">
<rect x="30" y="30" width="790" height="790" fill="#dfe5ec"/>
<path d="M40,40 L810,40 L810,120 L720,330 Q500,90 120,75Z" fill="#17568e"/>
<path d="M775,100 L820,100 L820,820 L745,790 L520,700 Q745,480 775,100Z" fill="#1d5a92"/>
<path d="M130,520 Q330,720 710,775 L760,820 L30,820 L60,760Z" fill="#3a80c0"/>
<path d="M320,130 L40,60 L30,780 L75,710 Q100,330 320,130Z" fill="#529cda"/>
<circle cx="420" cy="420" r="245" fill="#25a825"/>
<circle cx="420" cy="305" r="85" fill="#000"/>
<ellipse cx="420" cy="520" rx="178" ry="112" fill="#000"/>
</g></svg>
<!-- search magnifier big -->
<svg style="left:1375px;top:205px" width="28" height="28" viewBox="1375 205 28 28">
<circle cx="1384.6" cy="214.8" r="7" fill="#fff" stroke="#3a3a3a" stroke-width="1.9"/>
<path d="M1379.8 212.4q1.4-3 4.2-3.6" fill="none" stroke="#aaa" stroke-width="1.1"/>
<path d="M1390 220l10.8 10.4" stroke="#3a3a3a" stroke-width="2.9" stroke-linecap="round"/>
</svg>
<!-- blue tables icon -->
<svg style="left:1413px;top:205px" width="28" height="28" viewBox="1413 205 28 28">
<rect x="1414.8" y="207" width="19" height="16" rx="2.4" fill="#dcebff" stroke="#1e80ff" stroke-width="1.7"/>
<g stroke="#8fc0ff" stroke-width=".8"><path d="M1415.5 212h17.5M1415.5 216h17.5M1421 208v14M1427 208v14"/></g>
<rect x="1420.4" y="214.6" width="19" height="16.4" rx="2.4" fill="#e4f0ff" stroke="#1e80ff" stroke-width="1.7"/>
<g stroke="#8fc0ff" stroke-width=".8"><path d="M1421.2 218.6h17.4M1421.2 221.6h17.4M1421.2 224.6h17.4M1421.2 227.6h17.4M1426.6 215.4v15M1432.8 215.4v15"/></g>
</svg>
<!-- sql search icon -->
<svg style="left:1445px;top:205px" width="28" height="28" viewBox="1445 205 28 28">
<circle cx="1455.6" cy="215" r="6.8" fill="#fff" stroke="#3a3a3a" stroke-width="1.9"/>
<path d="M1450.8 212.6q1.4-3 4.2-3.6" fill="none" stroke="#aaa" stroke-width="1.1"/>
<path d="M1460.8 220.2l9.8 9.8" stroke="#3a3a3a" stroke-width="2.8" stroke-linecap="round"/>
<text x="1446.2" y="231.6" font-size="11" font-weight="700" fill="#3c9a1c" stroke="#3c9a1c" stroke-width=".5" font-family="Liberation Sans,sans-serif" textLength="22.6" lengthAdjust="spacingAndGlyphs">SQL</text>
</svg>
<!-- save icon -->
<svg style="left:1477px;top:205px" width="28" height="28" viewBox="1477 205 28 28">
<path d="M1479.4 207.8h19.6l4 3.6v19h-23.6z" fill="#f4f4f4" stroke="#3a4048" stroke-width="2" stroke-linejoin="round"/>
<rect x="1483" y="208" width="15.4" height="9.6" fill="#fff" stroke="#3a4048" stroke-width="1.5"/>
<path d="M1485 210.6h11.4M1485 213h11.4M1485 215.2h11.4" stroke="#3a4048" stroke-width=".9"/>
<rect x="1484.4" y="222.2" width="14" height="8" fill="#fff" stroke="#3a4048" stroke-width="1.7"/>
<rect x="1493.6" y="224.6" width="2.6" height="3.6" fill="#3a4048"/>
<path d="M1477.6 221h3.4" stroke="#f4f4f4" stroke-width="2.4"/>
</svg>
<!-- tables toolbar icons -->
<svg style="left:534px;top:386px" width="42" height="20" viewBox="534 386 42 20">
<circle cx="540.6" cy="393.2" r="4.5" fill="#fbfbfb" stroke="#333" stroke-width="1.2"/>
<path d="M537.6 391.4q1-2 2.8-2.2" fill="none" stroke="#999" stroke-width=".8"/>
<path d="M543.9 396.6l6 5.4" stroke="#333" stroke-width="1.5" stroke-linecap="round"/>
<path d="M560.3 389.8l12 11.6M572.3 389.8l-12 11.6" stroke="#2a3038" stroke-width="3.1"/>
</svg>
<svg style="left:666px;top:386px" width="12" height="14" viewBox="666 386 12 14">
<path d="M671.4 388.2v7.4" fill="none" stroke="#2a3038" stroke-width="1.8"/><path d="M668 392.6h6.8l-3.4 4.2z" fill="#2a3038"/>
</svg>
<svg style="left:424.6px;top:414.8px" width="26.3" height="22.2" viewBox="0 0 26.8 22.4" preserveAspectRatio="none">
<rect x=".8" y=".8" width="25.2" height="20.8" fill="#fff" stroke="#2a8aff" stroke-width="1.6"/>
<rect x="1" y="1" width="24.8" height="2.8" fill="#2a8aff"/>
<g stroke="#a8ccff" stroke-width="1"><path d="M2.2 5.6h22" /><path d="M2.2 7.8h22" /><path d="M2.2 10.0h22" /><path d="M2.2 12.2h22" /><path d="M2.2 14.4h22" /><path d="M2.2 16.6h22" /><path d="M2.2 18.8h22" /><path d="M2.2 21.0h22" /><path d="M9.2 3.8v17M17.4 3.8v17" stroke="#6aaeff" stroke-width=".9"/></g>
</svg>
<svg style="left:424.6px;top:456.8px" width="26.3" height="22.2" viewBox="0 0 26.8 22.4" preserveAspectRatio="none">
<rect x=".8" y=".8" width="25.2" height="20.8" fill="#fff" stroke="#2a8aff" stroke-width="1.6"/>
<rect x="1" y="1" width="24.8" height="2.8" fill="#2a8aff"/>
<g stroke="#a8ccff" stroke-width="1"><path d="M2.2 5.6h22" /><path d="M2.2 7.8h22" /><path d="M2.2 10.0h22" /><path d="M2.2 12.2h22" /><path d="M2.2 14.4h22" /><path d="M2.2 16.6h22" /><path d="M2.2 18.8h22" /><path d="M2.2 21.0h22" /><path d="M9.2 3.8v17M17.4 3.8v17" stroke="#6aaeff" stroke-width=".9"/></g>
</svg>
<svg style="left:424.6px;top:498.8px" width="26.3" height="22.2" viewBox="0 0 26.8 22.4" preserveAspectRatio="none">
<rect x=".8" y=".8" width="25.2" height="20.8" fill="#fff" stroke="#2a8aff" stroke-width="1.6"/>
<rect x="1" y="1" width="24.8" height="2.8" fill="#2a8aff"/>
<g stroke="#a8ccff" stroke-width="1"><path d="M2.2 5.6h22" /><path d="M2.2 7.8h22" /><path d="M2.2 10.0h22" /><path d="M2.2 12.2h22" /><path d="M2.2 14.4h22" /><path d="M2.2 16.6h22" /><path d="M2.2 18.8h22" /><path d="M2.2 21.0h22" /><path d="M9.2 3.8v17M17.4 3.8v17" stroke="#6aaeff" stroke-width=".9"/></g>
</svg>
<svg style="left:424.6px;top:540.8px" width="26.3" height="22.2" viewBox="0 0 26.8 22.4" preserveAspectRatio="none">
<rect x=".8" y=".8" width="25.2" height="20.8" fill="#fff" stroke="#2a8aff" stroke-width="1.6"/>
<rect x="1" y="1" width="24.8" height="2.8" fill="#2a8aff"/>
<g stroke="#a8ccff" stroke-width="1"><path d="M2.2 5.6h22" /><path d="M2.2 7.8h22" /><path d="M2.2 10.0h22" /><path d="M2.2 12.2h22" /><path d="M2.2 14.4h22" /><path d="M2.2 16.6h22" /><path d="M2.2 18.8h22" /><path d="M2.2 21.0h22" /><path d="M9.2 3.8v17M17.4 3.8v17" stroke="#6aaeff" stroke-width=".9"/></g>
</svg>
<!-- convert clock -->
<svg style="left:702px;top:407px" width="30" height="30" viewBox="702 407 30 30">
<circle cx="715.8" cy="421.8" r="11.6" fill="none" stroke="#2a3038" stroke-width="2.4" stroke-dasharray="12 1.6 20 2 9 1.6 16 1.8 9 1.6"/>
<path d="M715.6 413.4v8.6h6.2" fill="none" stroke="#2a3038" stroke-width="2.2"/>
<circle cx="707.6" cy="422" r=".7" fill="#2a3038"/><circle cx="715.8" cy="430" r=".7" fill="#2a3038"/><circle cx="724" cy="422" r=".7" fill="#2a3038"/>
</svg>
<!-- red table icon -->
<svg style="left:888px;top:411px" width="27" height="23" viewBox="888 411 27 23">
<rect x="889.8" y="412.5" width="22.6" height="19" fill="#e8f2ff" stroke="#1a80ff" stroke-width="1.5"/>
<rect x="890.4" y="413" width="21.4" height="2" fill="#1a80ff"/>
<g stroke="#fff" stroke-width="1.1"><path d="M891 420.6h20.4M891 422.6h20.4M891 428.8h20.4"/></g>
<g stroke="#9cc6ff" stroke-width=".8"><path d="M891 416.6h20.4M897.4 415v16M905 415v16M891 430.4h20.4"/></g>
<g stroke="#e8192c" stroke-width="1.2"><path d="M891 418.6h20.4M891 424.5h20.4M891 426.4h20.4"/></g>
</svg>
<!-- gray table icon -->
<svg style="left:920px;top:411px" width="27" height="25" viewBox="920 411 27 25">
<defs><filter id="gb"><feGaussianBlur stdDeviation=".35"/></filter></defs>
<g filter="url(#gb)"><rect x="921.6" y="412.6" width="23" height="19" fill="#d2d2d2" stroke="#b0b0b0" stroke-width="1.3"/>
<rect x="922" y="413" width="22.2" height="2.4" fill="#b4b4b4"/>
<g stroke="#bcbcbc" stroke-width=".9"><path d="M922 417.6h22.4M922 420.2h22.4M922 422.8h22.4M922 425.4h22.4M922 428h22.4M929 415v16M937 415v16"/></g>
<path d="M935.6 424.6l8.8 8.8M944.4 424.6l-8.8 8.8" stroke="#adadad" stroke-width="2.6"/></g>
</svg>
<!-- pin -->
<svg style="left:954px;top:407px" width="22" height="29" viewBox="954 407 22 29">
<path d="M958.9 421.4A7.2 7.2 0 1 1 971.2 412.8" fill="none" stroke="#222c36" stroke-width="1.9"/>
<path d="M959.8 423.6l5.2 10.4l6.8-17.6" fill="none" stroke="#222c36" stroke-width="1.9" stroke-linejoin="miter"/>
<circle cx="964.9" cy="416.6" r="2.7" fill="none" stroke="#505a66" stroke-width="1.3"/>
</svg>
<!-- CSV -->
<svg style="left:1474px;top:411px" width="27" height="22" viewBox="1474 411 27 22">
<rect x="1475.6" y="412.6" width="23.2" height="18.8" fill="#bfe8cc" stroke="#1a9a50" stroke-width="1.4"/>
<g stroke="#8fd4a6" stroke-width=".7"><path d="M1476 416.5h22.4M1476 420h22.4M1476 423.5h22.4M1476 427h22.4M1482 413v18M1488 413v18M1494 413v18"/></g>
<text x="1477.2" y="426.6" font-size="10.5" font-weight="700" fill="#1c2a24" font-family="Liberation Sans,sans-serif" textLength="20" lengthAdjust="spacingAndGlyphs">CSV</text>
</svg>
<!-- side panel -->
<svg style="left:1465px;top:441px" width="38" height="120" viewBox="1465 441 38 120">
<path d="M1480.8 458.6l-7.4 10.2l7.4 10.2M1490.6 458.6l-7.4 10.2l7.4 10.2" fill="none" stroke="#222c36" stroke-width="2.9"/>
<text transform="translate(1487.3 516.8) rotate(-90)" font-size="11.5" font-weight="700" fill="#000" font-family="Liberation Sans,sans-serif" textLength="28" lengthAdjust="spacingAndGlyphs">Show</text>
<path d="M1468.6 553.4V532.8q0-1.2 1.2-1.2h7.6l1.6 1.6h14q1.4 0 1.4 1.4V553.4z" fill="#fff" stroke="#222c36" stroke-width="1.1"/>
<path d="M1472 531.9h2.4M1468.4 550.6v1.6M1484 554.2h2" stroke="#f6f6f6" stroke-width="1.6"/>
<text x="1470.6" y="549.2" font-size="11.5" font-weight="700" fill="#222c36" font-family="Liberation Sans,sans-serif" textLength="22.4" lengthAdjust="spacingAndGlyphs">TAB</text>
</svg>
<!-- resize grips -->
<svg style="left:1493px;top:363.6px" width="13.5" height="13.5" viewBox="0 0 12 12"><g fill="#9a9a9a"><rect x="8.5" y="2" width="1.6" height="1.6"/><rect x="5.5" y="5" width="1.6" height="1.6"/><rect x="8.5" y="5" width="1.6" height="1.6"/><rect x="2.5" y="8" width="1.6" height="1.6"/><rect x="5.5" y="8" width="1.6" height="1.6"/><rect x="8.5" y="8" width="1.6" height="1.6"/></g></svg>
<svg style="left:1489.5px;top:791.2px" width="13.5" height="13.5" viewBox="0 0 12 12"><g fill="#9a9a9a"><rect x="8.5" y="2" width="1.6" height="1.6"/><rect x="5.5" y="5" width="1.6" height="1.6"/><rect x="8.5" y="5" width="1.6" height="1.6"/><rect x="2.5" y="8" width="1.6" height="1.6"/><rect x="5.5" y="8" width="1.6" height="1.6"/><rect x="8.5" y="8" width="1.6" height="1.6"/></g></svg>
<svg style="left:1504.4px;top:835.2px" width="13.5" height="13.5" viewBox="0 0 12 12"><g fill="#9a9a9a"><rect x="8.5" y="2" width="1.6" height="1.6"/><rect x="5.5" y="5" width="1.6" height="1.6"/><rect x="8.5" y="5" width="1.6" height="1.6"/><rect x="2.5" y="8" width="1.6" height="1.6"/><rect x="5.5" y="8" width="1.6" height="1.6"/><rect x="8.5" y="8" width="1.6" height="1.6"/></g></svg>

<span class="t" style="left:31.00px;top:10.00px;font-size:12px;transform:scaleX(0.9201);">ArtEx</span>
<span class="t" style="left:115.70px;top:62.00px;font-size:17px;transform:scaleX(0.9107);">Begin</span>
<span class="t" style="left:280.00px;top:34.00px;font-size:26px;transform:scaleX(1.0270);">MyiPhone</span>
<span class="t" style="left:280.00px;top:65.00px;font-size:13.5px;color:#666;transform:scaleX(0.9624);">C:\Users\iwhif\Desktop\Backup\20251013_104948\f2f833b91a9863a0f2f65709634aba802a3f19f3.zip</span>
<span class="t" style="left:305.30px;top:90.00px;font-size:12px;color:#f4f4f4;transform:scaleX(0.9686);">Save</span>
<span class="t" style="left:394.30px;top:90.00px;font-size:12px;color:#fff;transform:scaleX(0.9874);">Close</span>
<span class="t" style="left:40.50px;top:128.00px;font-size:13px;transform:scaleX(0.9221);">Run</span>
<span class="t" style="left:125.75px;top:113.00px;font-size:12px;color:#6d6d6d;transform:scaleX(0.8329);">Time Frame</span>
<span class="t" style="left:154.25px;top:131.00px;font-size:12px;transform:scaleX(0.8466);">Custom</span>
<span class="t" style="left:225.50px;top:113.00px;font-size:12px;color:#6d6d6d;transform:scaleX(0.7857);">From</span>
<span class="t" style="left:245.00px;top:131.00px;font-size:12px;transform:scaleX(0.8786);">2025-10-07 00:00</span>
<span class="t" style="left:386.00px;top:113.00px;font-size:12px;color:#6d6d6d;transform:scaleX(0.9655);">To</span>
<span class="t" style="left:397.00px;top:131.00px;font-size:12px;transform:scaleX(0.8813);">2025-10-14 00:00</span>
<span class="t" style="left:538.75px;top:135.00px;font-size:12px;transform:scaleX(0.8944);">Snap to Hour</span>
<span class="t" style="left:652.00px;top:113.00px;font-size:12px;color:#6d6d6d;transform:scaleX(0.8653);">Duration</span>
<span class="t" style="left:664.50px;top:130.00px;font-size:12px;transform:scaleX(0.8499);">7 Days</span>
<span class="t" style="left:1302.50px;top:91.00px;font-size:14px;transform:scaleX(0.9829);">Save Report</span>
<span class="t" style="left:1395.40px;top:90.00px;font-size:14px;transform:scaleX(0.9309);">Settings</span>
<span class="t" style="left:1470.00px;top:90.00px;font-size:14px;transform:scaleX(0.9756);">About</span>
<span class="t" style="left:1223.60px;top:113.00px;font-size:12px;color:#6d6d6d;transform:scaleX(0.8754);">TimeZone</span>
<span class="t" style="left:1243.80px;top:132.00px;font-size:12px;transform:scaleX(0.8765);">(UTC-07:00) Mountain Time (US &amp; Canada)</span>
<span class="t" style="left:58.80px;top:167.00px;font-size:13px;transform:scaleX(0.8321);">Welcome!</span>
<span class="t" style="left:196.40px;top:167.00px;font-size:13px;transform:scaleX(0.8252);">Device</span>
<span class="t" style="left:321.60px;top:167.00px;font-size:13px;transform:scaleX(0.8263);width:12.83px;overflow:hidden;">Contacts</span>
<span class="t" style="left:33.00px;top:196.00px;font-size:13px;color:#a9a9a9;transform:scaleX(1.1034);">\</span>
<span class="t" style="left:48.40px;top:222.00px;font-size:13.5px;color:#a4a4a4;transform:scaleX(0.9768);">containers</span>
<span class="t" style="left:48.40px;top:248.00px;font-size:13.5px;color:#a4a4a4;">db</span>
<span class="t" style="left:48.40px;top:274.00px;font-size:13.5px;color:#a4a4a4;transform:scaleX(0.9838);">installd</span>
<span class="t" style="left:48.40px;top:300.00px;font-size:13.5px;color:#a4a4a4;transform:scaleX(0.9808);">Keychains</span>
<span class="t" style="left:48.40px;top:326.00px;font-size:13.5px;color:#a4a4a4;">Managed Preferences</span>
<span class="t" style="left:48.40px;top:352.00px;font-size:13.5px;color:#a4a4a4;">mobile</span>
<span class="t" style="left:48.40px;top:378.00px;font-size:13.5px;color:#a4a4a4;transform:scaleX(1.0315);">MobileDevice</span>
<span class="t" style="left:48.40px;top:404.00px;font-size:13.5px;color:#a4a4a4;">NetworkDomain</span>
<span class="t" style="left:48.40px;top:430.00px;font-size:13.5px;color:#a4a4a4;">preferences</span>
<span class="t" style="left:48.40px;top:456.00px;font-size:13.5px;color:#a4a4a4;">ProtectedDomain</span>
<span class="t" style="left:48.40px;top:482.00px;font-size:13.5px;color:#a4a4a4;transform:scaleX(0.9714);">root</span>
<span class="t" style="left:48.40px;top:508.00px;font-size:13.5px;color:#a4a4a4;transform:scaleX(0.9864);">wireless</span>
<span class="t" style="left:288.00px;top:230.00px;font-size:12px;transform:scaleX(1.1963);">\</span>
<span class="t" style="left:243.00px;top:254.00px;font-size:13px;transform:scaleX(0.8178);">Icon</span>
<span class="t" style="left:276.20px;top:254.00px;font-size:13px;transform:scaleX(0.7694);">FileName</span>
<span class="t" style="left:272.50px;top:280.00px;font-size:16px;color:#fff;transform:scaleX(0.9680);width:91.94px;overflow:hidden;">BrowserState.db</span>
<span class="t" style="left:238.00px;top:802.00px;font-size:12px;transform:scaleX(0.9054);">1 Files</span>
<span class="t" style="left:430.50px;top:161.00px;font-size:12px;transform:scaleX(0.9045);">BrowserState.db</span>
<span class="t" style="left:422.20px;top:182.00px;font-size:12px;transform:scaleX(0.8773);">SQL Viewer</span>
<span class="t" style="left:490.00px;top:184.00px;font-size:12px;transform:scaleX(0.8604);">SQL Explorer</span>
<span class="t" style="left:462.00px;top:213.00px;font-size:12px;transform:scaleX(0.9085);">Execute SQL</span>
<span class="t" style="left:566.25px;top:213.00px;font-size:12px;transform:scaleX(0.9583);">Canned Queries</span>
<span class="t" style="left:787.50px;top:213.00px;font-size:12px;transform:scaleX(0.9215);">Searching SQL</span>
<span class="t" style="left:902.50px;top:213.00px;font-size:12px;transform:scaleX(0.9371);">My Parser</span>
<span class="t" style="left:451.30px;top:244.00px;font-size:16px;color:#0000ff;transform:scaleX(0.9398);">SELECT * FROM</span>
<span class="t" style="left:572.50px;top:244.00px;font-size:16px;color:#800080;transform:scaleX(0.9234);">TABS</span>
<span class="t" style="left:431.50px;top:289.00px;font-size:11px;color:#555;transform:scaleX(0.8544);">&lt;</span>
<span class="t" style="left:1260.50px;top:289.00px;font-size:11px;color:#555;transform:scaleX(0.8544);">&gt;</span>
<span class="t" style="left:1352.00px;top:246.00px;font-size:12px;font-weight:700;transform:scaleX(0.9415);">No Suggestions</span>
<span class="t" style="left:424.25px;top:362.00px;font-size:12px;color:#a0a0a0;">Waiting...</span>
<span class="t" style="left:460.00px;top:413.00px;font-size:15px;">browser_windows</span>
<span class="t" style="left:627.00px;top:432.00px;font-size:12px;transform:scaleX(0.8866);">3 Records</span>
<span class="t" style="left:460.00px;top:455.00px;font-size:15px;transform:scaleX(0.9777);">sqlite_sequence</span>
<span class="t" style="left:627.00px;top:474.00px;font-size:12px;transform:scaleX(0.8866);">3 Records</span>
<span class="t" style="left:460.00px;top:497.00px;font-size:15px;">tab_sessions</span>
<span class="t" style="left:627.00px;top:516.00px;font-size:12px;transform:scaleX(0.8866);">3 Records</span>
<span class="t" style="left:460.00px;top:539.00px;font-size:15px;transform:scaleX(0.9873);">tabs</span>
<span class="t" style="left:627.00px;top:558.00px;font-size:12px;transform:scaleX(0.8866);">3 Records</span>
<span class="t" style="left:660.20px;top:389.00px;font-size:15.5px;color:#2a3038;">1</span>
<span class="t" style="left:425.00px;top:795.00px;font-size:12px;transform:scaleX(0.9239);">4 Tables</span>
<span class="t" style="left:695.00px;top:387.00px;font-size:12px;transform:scaleX(0.9066);">Without WAL (3)</span>
<span class="t" style="left:785.50px;top:389.00px;font-size:12px;transform:scaleX(0.8562);">Combined (3)</span>
<span class="t" style="left:733.25px;top:416.00px;font-size:12px;transform:scaleX(0.9582);">Convert Dates</span>
<span class="t" style="left:818.25px;top:416.00px;font-size:12px;transform:scaleX(0.9449);">Show NULL</span>
<span class="t" style="left:781.90px;top:449.00px;font-size:11.5px;font-weight:700;transform:scaleX(0.9771);">id</span>
<span class="t" style="left:881.25px;top:449.00px;font-size:11.5px;font-weight:700;transform:scaleX(1.0090);">uuid</span>
<span class="t" style="left:971.25px;top:449.00px;font-size:11.5px;font-weight:700;transform:scaleX(1.0390);">title</span>
<span class="t" style="left:1129.60px;top:449.00px;font-size:11.5px;font-weight:700;transform:scaleX(0.9250);">url</span>
<span class="t" style="left:1429.90px;top:449.00px;font-size:11.5px;font-weight:700;transform:scaleX(0.9143);width:30.63px;overflow:hidden;">user_agent</span>
<span class="t" style="left:710.50px;top:473.00px;font-size:12px;font-weight:700;transform:scaleX(0.8972);">1</span>
<span class="t" style="left:779.00px;top:473.00px;font-size:12px;color:#fff;transform:scaleX(0.6131);">1</span>
<span class="t" style="left:878.25px;top:473.00px;font-size:12px;transform:scaleX(0.8892);">BAA72928-0F...</span>
<span class="t" style="left:968.25px;top:473.00px;font-size:12px;transform:scaleX(0.8788);">9:35 - Google Search</span>
<span class="t" style="left:1125.00px;top:473.00px;font-size:12px;transform:scaleX(0.9029);">https://www.google.ca/search?q=9%3A35&amp;ie=UTF-8&amp;oe=...</span>
<span class="t" style="left:1425.30px;top:473.00px;font-size:12px;transform:scaleX(0.8407);width:38.66px;overflow:hidden;">https://...</span>
<span class="t" style="left:710.50px;top:498.00px;font-size:12px;font-weight:700;transform:scaleX(0.8972);">2</span>
<span class="t" style="left:778.10px;top:498.00px;font-size:12px;transform:scaleX(0.8822);">2</span>
<span class="t" style="left:878.25px;top:498.00px;font-size:12px;transform:scaleX(0.8789);">85E20933-826...</span>
<span class="t" style="left:968.25px;top:498.00px;font-size:12px;transform:scaleX(0.8788);">9:36 - Google Search</span>
<span class="t" style="left:1125.00px;top:498.00px;font-size:12px;transform:scaleX(0.9029);">https://www.google.ca/search?q=9%3A36&amp;ie=UTF-8&amp;oe=...</span>
<span class="t" style="left:1425.30px;top:498.00px;font-size:12px;transform:scaleX(0.8407);width:38.66px;overflow:hidden;">https://...</span>
<span class="t" style="left:710.50px;top:523.00px;font-size:12px;font-weight:700;transform:scaleX(0.8972);">3</span>
<span class="t" style="left:778.10px;top:523.00px;font-size:12px;transform:scaleX(0.8822);">3</span>
<span class="t" style="left:878.25px;top:523.00px;font-size:12px;transform:scaleX(0.8826);">6B28DB64-936...</span>
<span class="t" style="left:968.25px;top:523.00px;font-size:12px;transform:scaleX(0.8793);">1034 - Google Search</span>
<span class="t" style="left:1125.00px;top:523.00px;font-size:12px;transform:scaleX(0.9144);">https://www.google.ca/search?q=1034&amp;ie=UTF-8&amp;oe=UT...</span>
<span class="t" style="left:1425.30px;top:523.00px;font-size:12px;transform:scaleX(0.8407);width:38.66px;overflow:hidden;">https://...</span>
<span class="t" style="left:695.00px;top:791.00px;font-size:12px;transform:scaleX(0.9417);white-space:pre;">3 Rows  (1 Cell Selected)</span>
</div></div>
</body></html>
